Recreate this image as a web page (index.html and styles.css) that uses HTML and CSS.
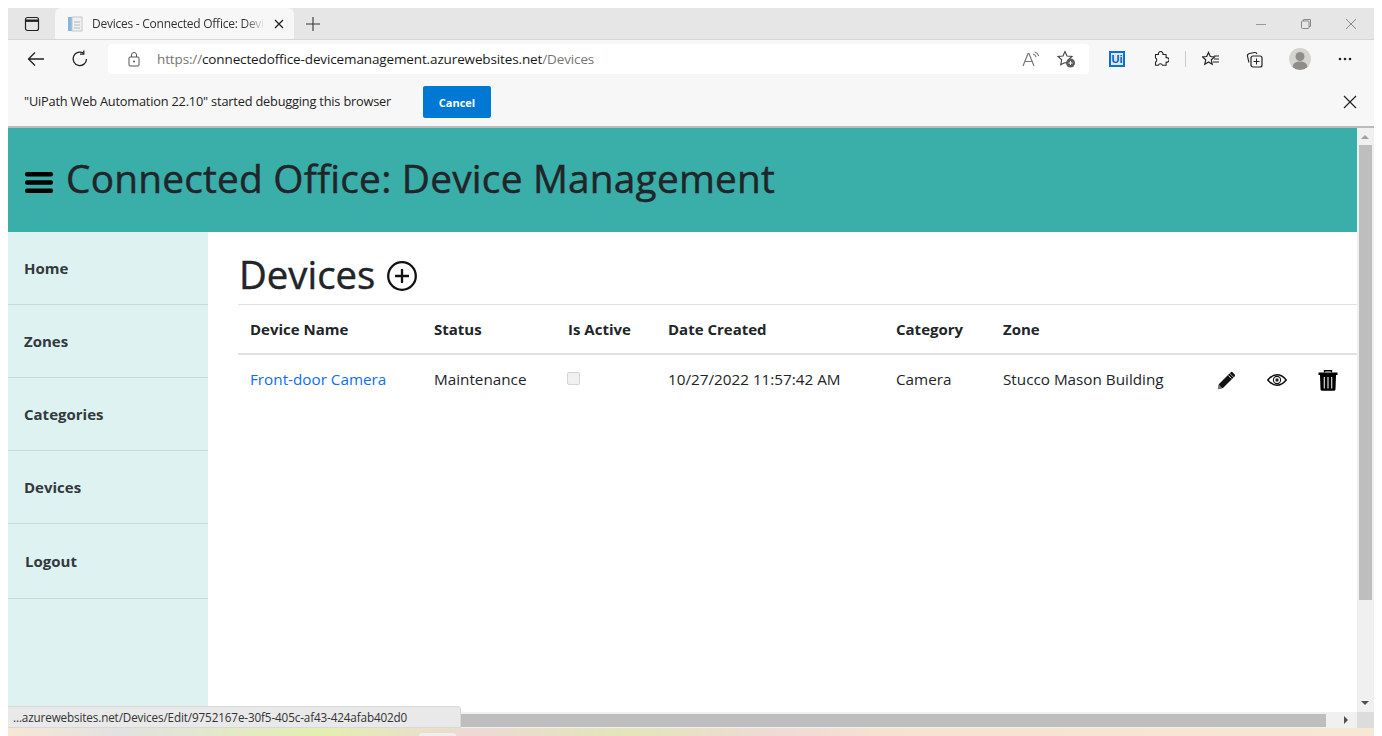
FILE: index.html
```html
<!DOCTYPE html>
<html lang="en">
<head>
<meta charset="utf-8">
<title>Devices - Connected Office: Device Management</title>
<link rel="stylesheet" href="styles.css">
</head>
<body>
<div class="window">
  <div class="tabstrip">
    <button class="strip-btn"><svg width="16" height="16" viewBox="0 0 16 16"><rect x="1.5" y="1.5" width="13" height="13" rx="2" fill="none" stroke="#222" stroke-width="1.2"/><path d="M1.5 4.7h13" stroke="#222" stroke-width="2.4"/></svg></button>
    <div class="tab">
      <svg class="favicon" width="16" height="16" viewBox="0 0 16 16"><rect x="1" y="1" width="4" height="14" fill="#7fb7e4"/><rect x="5" y="1" width="10" height="14" fill="#eef1f4" stroke="#c4c8cc"/><path d="M7 6h6M7 9h6M7 12h6" stroke="#b4b8bc"/></svg>
      <span class="tab-title">Devices - Connected Office: Devi</span>
      <svg width="10" height="10" viewBox="0 0 10 10"><path d="M1 1l8 8M9 1l-8 8" stroke="#222" stroke-width="1.3"/></svg>
    </div>
    <svg class="newtab" width="16" height="16" viewBox="0 0 16 16"><path d="M8 1v14M1 8h14" stroke="#333" stroke-width="1.1"/></svg>
    <div class="caption">
      <svg width="12" height="12" viewBox="0 0 12 12"><path d="M1 6.5h10" stroke="#999"/></svg>
      <svg width="12" height="12" viewBox="0 0 12 12"><rect x="1.5" y="3" width="7.5" height="7.5" rx="1" fill="none" stroke="#888"/><path d="M3.5 3V1.5h7V8.500H9" fill="none" stroke="#888"/></svg>
      <svg width="12" height="12" viewBox="0 0 12 12"><path d="M1 1l10 10M11 1L1 11" stroke="#888"/></svg>
    </div>
  </div>
  <div class="toolbar">
    <svg class="tb-back" width="18" height="16" viewBox="0 0 18 16"><path d="M17 8H1.500M8 1.500L1.500 8 8 14.500" fill="none" stroke="#222" stroke-width="1.3"/></svg>
    <svg class="tb-reload" width="18" height="18" viewBox="0 0 18 18"><path d="M15.500 9A6.700 6.700 0 1 1 12.500 3.300" fill="none" stroke="#222" stroke-width="1.3"/><path d="M12.800 0.500v3.700H9" fill="none" stroke="#222" stroke-width="1.3"/></svg>
    <div class="address">
      <svg class="lock" width="12" height="15" viewBox="0 0 12 15"><rect x="1" y="5" width="10" height="9" rx="1" fill="none" stroke="#555"/><path d="M3.500 5V3a2.500 2.500 0 0 1 5 0v2" fill="none" stroke="#555"/><circle cx="6" cy="9.500" r="1" fill="#555"/></svg>
      <span class="url"><span class="url-dim">https://</span>connectedoffice-devicemanagement.azurewebsites.net<span class="url-dim">/Devices</span></span>
      <div class="addr-icons">
        <svg width="18" height="16" viewBox="0 0 18 16"><path d="M1 15L6 2.500h1L12 15M3 10.500h7" fill="none" stroke="#777" stroke-width="1.200"/><path d="M11 3c1.700.5 2.700 1.500 3.200 3.200M12.700 1c2 .6 3.400 2 4 4" fill="none" stroke="#777" stroke-width="1.100"/></svg>
        <svg width="19" height="18" viewBox="0 0 19 18"><path d="M8 1.500l2 4.500 5 .5-3.700 3.300 1 5L8 12.500l-4.300 2.300 1-5L1 6.500l5-.5z" fill="none" stroke="#444" stroke-width="1.100"/><circle cx="13.500" cy="13" r="4.500" fill="#5c5c5c"/><path d="M11.500 13h4M13.500 11v4" stroke="#fff"/></svg>
      </div>
    </div>
    <div class="ext-ui"><span>Ui</span></div>
    <svg class="ext-puzzle" width="16" height="16" viewBox="0 0 16 16"><path d="M2.500 3.500h3a2.300 2.300 0 1 1 4.400 0h3.200v3.200a2.300 2.300 0 1 1 0 4.400v3.200H9.500a2.200 2.200 0 0 0-4.200 0H2.500v-3.400a2.200 2.200 0 0 0 0-4z" fill="none" stroke="#222" stroke-width="1.100" stroke-linejoin="round"/></svg>
    <span class="tb-sep"></span>
    <svg class="tb-fav" width="18" height="16" viewBox="0 0 18 16"><path d="M6.500 1.500l1.800 4 4.200.4-3.200 2.900.9 4.400-3.700-2.200-3.700 2.200.9-4.400L.5 5.900l4.200-.4z" fill="none" stroke="#222" stroke-width="1.200"/><path d="M12 5h5M12 8h5M11 11h6" stroke="#222"/></svg>
    <svg class="tb-coll" width="17" height="17" viewBox="0 0 17 17"><path d="M3 11.500L1.500 5.500Q1 3 3.500 2.500l5-1q2-.3 2.500 1.500" fill="none" stroke="#222" stroke-width="1.100"/><rect x="5" y="5" width="11" height="11" rx="2" fill="none" stroke="#222" stroke-width="1.200"/><path d="M10.500 7.500v6M7.500 10.500h6" stroke="#222"/></svg>
    <svg class="tb-avatar" width="22" height="22" viewBox="0 0 22 22"><circle cx="11" cy="11" r="11" fill="#d6d4d0"/><circle cx="11" cy="8.500" r="4.500" fill="#8f8d89"/><path d="M3.500 19c.5-4 3.500-5.500 7.500-5.500s7 1.500 7.500 5.500a11 11 0 0 1-15 0z" fill="#8f8d89"/></svg>
    <svg class="tb-more" width="14" height="4" viewBox="0 0 14 4"><circle cx="2" cy="2" r="1.300" fill="#222"/><circle cx="7" cy="2" r="1.300" fill="#222"/><circle cx="12" cy="2" r="1.300" fill="#222"/></svg>
  </div>
  <div class="infobar">
    <span class="info-text">"UiPath Web Automation 22.10" started debugging this browser</span>
    <button class="info-cancel">Cancel</button>
    <svg class="info-close" width="14" height="14" viewBox="0 0 14 14"><path d="M1 1l12 12M13 1L1 13" stroke="#222" stroke-width="1.200"/></svg>
  </div>
  <div class="viewport">
    <div class="page">
      <header class="site-header">
        <svg class="burger" width="28" height="21" viewBox="0 0 28 21"><rect x="0" y="0" width="28" height="4.400" rx="2" fill="#000"/><rect x="0" y="8.300" width="28" height="4.400" rx="2" fill="#000"/><rect x="0" y="16.600" width="28" height="4.400" rx="2" fill="#000"/></svg>
        <h1 class="site-title">Connected Office: Device Management</h1>
      </header>
      <div class="page-body">
        <nav class="sidebar">
          <a class="nav-item">Home</a>
          <a class="nav-item">Zones</a>
          <a class="nav-item">Categories</a>
          <a class="nav-item">Devices</a>
          <a class="nav-item nav-last">Logout</a>
        </nav>
        <main class="content">
          <div class="heading">
            <h2 class="page-title">Devices</h2>
            <svg class="add-icon" width="30" height="30" viewBox="0 0 30 30"><circle cx="15" cy="15" r="13.800" fill="none" stroke="#111" stroke-width="2.300"/><path d="M15 8v14M8 15h14" stroke="#111" stroke-width="2.300"/></svg>
          </div>
          <table class="grid">
            <colgroup>
              <col class="c-name"><col class="c-status"><col class="c-active"><col class="c-date"><col class="c-cat"><col class="c-zone"><col class="c-act">
            </colgroup>
            <thead>
              <tr><th>Device Name</th><th>Status</th><th>Is Active</th><th>Date Created</th><th>Category</th><th>Zone</th><th></th></tr>
            </thead>
            <tbody>
              <tr>
                <td><a class="link">Front-door Camera</a></td>
                <td>Maintenance</td>
                <td><span class="check"></span></td>
                <td>10/27/2022 11:57:42 AM</td>
                <td>Camera</td>
                <td>Stucco Mason Building</td>
                <td>
                  <div class="actions">
                    <svg width="19" height="19" viewBox="0 0 19 19"><path d="M0.800 18.200l1.200-5.200L12.500 2.500l4 4L6 17z" fill="#111"/><path d="M13.600 1.400q1-1 2-.1l2.100 2.100q.9 1-.1 2l-.8.800-4-4z" fill="#111"/><path d="M1.800 13.600l3.600 3.600-4.600 1z" fill="#777"/><path d="M11.500 4.500l3 3" stroke="#fff" stroke-width=".8"/></svg>
                    <svg width="20" height="12" viewBox="0 0 20 12"><path d="M.8 6Q5 .8 10 .8T19.200 6Q15 11.200 10 11.200T.8 6z" fill="none" stroke="#111" stroke-width="1.500"/><circle cx="10" cy="6" r="3.600" fill="none" stroke="#111" stroke-width="1.100"/><circle cx="10" cy="6" r="1.700" fill="#222"/></svg>
                    <svg width="20" height="21" viewBox="0 0 20 21"><path d="M6.500 2.500V.8h7v1.700" fill="none" stroke="#000" stroke-width="1.400"/><path d="M0.500 2.500h19v2.500H.5z" fill="#000"/><path d="M2 5h16l-.5 14.200q0 1.600-1.800 1.600H4.300q-1.800 0-1.800-1.600z" fill="#000"/><path d="M6.300 7v11.500M10 7v11.500M13.700 7v11.500" stroke="#d8d8d8" stroke-width="1.200"/></svg>
                  </div>
                </td>
              </tr>
            </tbody>
          </table>
        </main>
      </div>
    </div>
    <div class="vscroll">
      <span class="arrow-up"></span>
      <span class="vthumb"></span>
      <span class="arrow-down"></span>
    </div>
  </div>
  <div class="hscroll">
    <span class="hthumb"></span>
    <span class="arrow-right"></span>
    <span class="corner"></span>
  </div>
  <div class="status-bubble">...azurewebsites.net/Devices/Edit/9752167e-30f5-405c-af43-424afab402d0</div>
</div>
<div class="desktop"><span class="desktop-tip"></span></div>
</body>
</html>
```
FILE: styles.css
```css
* { box-sizing: border-box; }
html, body { margin: 0; padding: 0; height: 736px; overflow: hidden; background: #fff; }
body { padding: 8px 8px 0; font-family: "Open Sans", "Noto Sans", sans-serif; color: #212529; display: flex; flex-direction: column; }
.window { position: relative; width: 1366px; height: 720px; display: flex; flex-direction: column; flex: none; }
.desktop { position: relative; width: 1366px; height: 8px; flex: none; background: linear-gradient(90deg, #f7e7d3 0%, #e2e2e2 8%, #e3efb0 23%, #ecd9d5 34%, #e3e6b8 45%, #eedbd5 56%, #f6e2d0 64%, #f5e8d4 100%); }
.desktop-tip { position: absolute; left: 411px; top: 5px; width: 37px; height: 3px; background: #f2eeee; border-radius: 3px 3px 0 0; }

.tabstrip { height: 32px; background: #e6e6e6; border-bottom: 1px solid #d6d6d6; display: flex; align-items: center; flex: none; }
.strip-btn { width: 47px; height: 31px; padding: 0 0 0 1px; border: 0; background: none; display: flex; align-items: center; justify-content: center; }
.tab { width: 239px; height: 31px; background: #f7f7f7; border-radius: 6px 6px 0 0; display: flex; align-items: center; padding: 0 10px 0 12px; gap: 9px; }
.favicon { flex: none; }
.tab-title { flex: 1; font-size: 12px; letter-spacing: -.25px; color: #333; white-space: nowrap; overflow: hidden; -webkit-mask-image: linear-gradient(90deg, #000 88%, transparent 100%); mask-image: linear-gradient(90deg, #000 88%, transparent 100%); }
.newtab { margin-left: 11px; }
.caption { margin-left: auto; display: flex; gap: 33px; padding-right: 17px; }

.toolbar { height: 40px; background: #f7f7f7; display: flex; align-items: center; flex: none; padding: 0 0 2px 19px; }
.tb-back { flex: none; }
.tb-reload { margin-left: 26px; flex: none; }
.address { width: 981px; height: 30px; margin-left: 19px; background: #fff; border-radius: 4px; display: flex; align-items: center; padding: 0 13px 0 20px; }
.lock { flex: none; }
.url { margin-left: 17px; font-size: 13.500px; letter-spacing: -.13px; color: #1a1a1a; white-space: nowrap; }
.url-dim { color: #767676; }
.addr-icons { margin-left: auto; display: flex; align-items: center; gap: 17px; }
.ext-ui { width: 16px; height: 16px; margin-left: 20px; border: 2px solid #0a6fd8; background: #dbe9f8; display: flex; align-items: center; justify-content: center; flex: none; }
.ext-ui span { font-size: 11px; font-weight: 700; line-height: 12px; color: #0a5cb8; font-family: "Liberation Sans", sans-serif; }
.ext-puzzle { margin-left: 28px; flex: none; }
.tb-sep { width: 1px; height: 16px; background: #ccc; margin-left: 16px; flex: none; }
.tb-fav { margin-left: 16px; flex: none; }
.tb-coll { margin-left: 26px; flex: none; }
.tb-avatar { margin-left: 26px; flex: none; }
.tb-more { margin-left: 27px; flex: none; }

.infobar { height: 48px; background: #f7f7f7; border-bottom: 2px solid #bbb; display: flex; align-items: center; padding: 0 17px 2px 16px; flex: none; }
.info-text { font-size: 12.750px; letter-spacing: -.18px; color: #222; white-space: nowrap; width: 399px; padding-bottom: 2px; }
.info-cancel { width: 68px; height: 32px; background: #0078d4; color: #fff; border: 0; border-radius: 2px; font: 700 11px "Open Sans", sans-serif; padding: 0; }
.info-close { margin-left: auto; }

.viewport { flex: 1; display: flex; min-height: 0; }
.page { width: 1349px; display: flex; flex-direction: column; }
.site-header { height: 104px; background: #3aaea8; display: flex; align-items: center; padding: 0 0 4px 17px; gap: 13px; flex: none; }
.burger { flex: none; margin-top: 8px; }
.site-title { margin: 0; font-size: 38.800px; font-weight: 400; line-height: 48px; letter-spacing: .22px; white-space: nowrap; -webkit-text-stroke: .45px #212529; }
.page-body { flex: 1; display: flex; min-height: 0; }
.sidebar { width: 200px; background: #def2f1; flex: none; display: flex; flex-direction: column; }
.nav-item { height: 73px; padding: 24px 16px 0; font-size: 15px; line-height: 24px; font-weight: 700; color: #33383d; border-bottom: 1px solid #c5dbdb; display: block; flex: none; }
.nav-last { height: 75px; padding: 25px 16px 0 17px; }
.content { flex: 1; padding: 15px 0 0 30px; min-width: 0; }
.heading { height: 54px; margin-bottom: 3px; display: flex; align-items: center; gap: 12px; }
.page-title { margin: 0 0 0 1px; font-size: 38.300px; line-height: 48px; font-weight: 400; letter-spacing: .03px; white-space: nowrap; -webkit-text-stroke: .45px #212529; }
.add-icon { flex: none; margin-top: 4px; }

.grid { width: 1119px; table-layout: fixed; border-collapse: collapse; font-size: 15px; }
.c-name { width: 184px; } .c-status { width: 134px; } .c-active { width: 100px; } .c-date { width: 228px; } .c-cat { width: 107px; } .c-zone { width: 210px; } .c-act { width: 156px; }
.grid th { height: 49px; padding: 1px 12px 0; text-align: left; font-weight: 700; font-size: 15px; border-top: 1px solid #dee2e6; border-bottom: 2px solid #dee2e6; white-space: nowrap; }
.grid td { height: 50px; padding: 0 12px; vertical-align: middle; white-space: nowrap; font-size: 15.250px; }
.link { color: #0d6efd; }
.check { display: block; width: 13px; height: 13px; margin: -1px 0 0 -1px; background: #f0f0f0; border: 1px solid #d4d4d4; border-radius: 2px; }
.actions { display: flex; align-items: center; gap: 31px; margin: 2px 0 0 4px; }

.vscroll { width: 17px; background: #f0f0f0; position: relative; flex: none; }
.arrow-up { position: absolute; left: 4px; top: 7px; border: 4px solid transparent; border-top: 0; border-bottom: 4px solid #a0a0a0; border-left-width: 4.500px; border-right-width: 4.500px; }
.vthumb { position: absolute; left: 2px; top: 17px; width: 13px; height: 455px; background: #bebebe; }
.arrow-down { position: absolute; left: 4px; bottom: 7px; border: 4px solid transparent; border-bottom: 0; border-top: 4px solid #505050; border-left-width: 4.500px; border-right-width: 4.500px; }

.hscroll { height: 16px; background: #f0f0f0; display: flex; align-items: center; flex: none; }
.hthumb { width: 1318px; height: 13px; background: #bebebe; }
.arrow-right { margin-left: 18px; border: 4px solid transparent; border-right: 0; border-left: 4px solid #505050; }
.corner { margin-left: auto; width: 17px; height: 16px; background: #dcdcdc; }

.status-bubble { position: absolute; left: 0; top: 698px; width: 453px; height: 22px; background: #e9e9e9; border: 1px solid #d8d8d8; border-left: 0; border-radius: 0 4px 0 0; padding-left: 5px; font-size: 11.700px; line-height: 20px; letter-spacing: -.13px; color: #333; white-space: nowrap; }
```
